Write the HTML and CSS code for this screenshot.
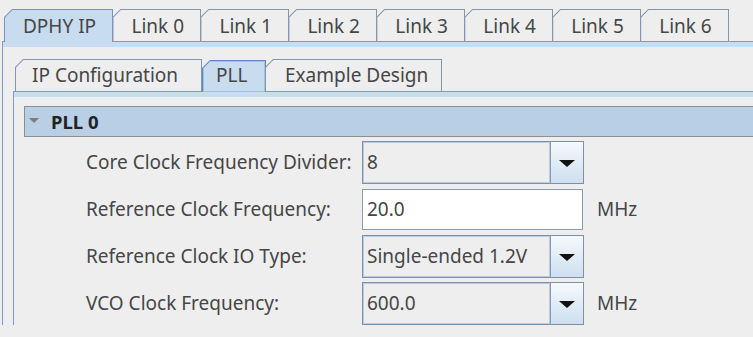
FILE: index.html
```html
<!DOCTYPE html>
<html lang="en">
<head>
    <meta charset="UTF-8">
    <title>DPHY IP - PLL</title>
    <link rel="stylesheet" href="styles.css">
</head>
<body>

<div class="tabpane outer">
    <div class="tabrow">
        <div class="tab selected"><div class="face">DPHY IP</div></div>
        <div class="tab"><div class="face">Link 0</div></div>
        <div class="tab"><div class="face">Link 1</div></div>
        <div class="tab"><div class="face">Link 2</div></div>
        <div class="tab"><div class="face">Link 3</div></div>
        <div class="tab"><div class="face">Link 4</div></div>
        <div class="tab"><div class="face">Link 5</div></div>
        <div class="tab"><div class="face">Link 6</div></div>
    </div>
    <div class="tabbody">
        <div class="strip"></div>

        <div class="tabpane inner">
            <div class="tabrow">
                <div class="tab tab-ipconf"><div class="face">IP Configuration</div></div>
                <div class="tab selected focused tab-pll"><div class="face">PLL</div></div>
                <div class="tab tab-example"><div class="face">Example Design</div></div>
            </div>
            <div class="tabbody">
                <div class="strip"></div>

                <div class="section">
                    <div class="section-head">
                        <span class="toggle"></span>
                        <span class="section-title">PLL 0</span>
                    </div>

                    <div class="form">
                        <label class="field-label">Core Clock Frequency Divider:</label>
                        <div class="combo">
                            <div class="combo-value">8</div>
                            <div class="combo-arrow"><span></span></div>
                        </div>
                        <span class="unit"></span>

                        <label class="field-label">Reference Clock Frequency:</label>
                        <div class="textfield">20.0</div>
                        <span class="unit">MHz</span>

                        <label class="field-label">Reference Clock IO Type:</label>
                        <div class="combo">
                            <div class="combo-value">Single-ended 1.2V</div>
                            <div class="combo-arrow"><span></span></div>
                        </div>
                        <span class="unit"></span>

                        <label class="field-label">VCO Clock Frequency:</label>
                        <div class="combo">
                            <div class="combo-value">600.0</div>
                            <div class="combo-arrow"><span></span></div>
                        </div>
                        <span class="unit">MHz</span>
                    </div>
                </div>
            </div>
        </div>
    </div>
</div>

</body>
</html>
```

FILE: styles.css
```css
body {
    margin: 0;
    background-color: #eeeeee;
    font-family: "Noto Sans", "Open Sans", sans-serif;
    font-size: 19px;
    color: #464646;
    overflow: hidden;
    height: 337px;
}

/* tabbed panes */
.outer {
    margin: 9px 0 0 2px;
}
.tabrow {
    display: flex;
    padding-left: 2px;
    position: relative;
    z-index: 1;
}
.tab {
    height: 32px;
    padding: 1px 1px 0 1px;
    box-sizing: border-box;
    background-color: #8496ad;
    clip-path: polygon(8px 0, 100% 0, 100% 100%, 0 100%, 0 8px);
    margin-right: -1px;
}
.tab .face {
    height: 100%;
    display: flex;
    align-items: center;
    padding: 0 16.4px 2px 18px;
    background-color: #eeeeee;
    clip-path: polygon(7.4px 0, 100% 0, 100% 100%, 0 100%, 0 7.4px);
}
.tab.selected {
    height: 33px;
    margin-bottom: -1px;
    background-color: #7e93b8;
}
.tab.selected .face {
    background-color: #c8dcf0;
    padding-bottom: 3px;
}
.tabbody {
    border-top: 1px solid #7d9ad0;
    border-left: 1px solid #7d9ad0;
}
.strip {
    height: 5px;
    background-color: #cadcf1;
}

.inner {
    margin: 12px 0 0 10px;
}
.inner .tabrow {
    padding-left: 2px;
}
.tab-ipconf .face {
    width: 185px;
    padding: 0 0 2px 16px;
    box-sizing: border-box;
}
.tab-pll .face {
    width: 62px;
    padding: 0 0 2px 13px;
    box-sizing: border-box;
}
.tab-example .face {
    width: 175px;
    padding: 0 0 2px 19px;
    box-sizing: border-box;
}
.tab.focused {
    margin-top: 1px;
    height: 32px;
    background-color: #6485c4;
    margin-left: 1px;
}
.tab.focused .face {
    box-shadow: inset 0 0 0 1px #a5bfe6;
}

/* PLL section */
.section {
    padding: 9px 0 0 10px;
}
.section-head {
    height: 31px;
    box-sizing: border-box;
    border: 1px solid #8e8e8e;
    border-right: none;
    background-color: #b8cfe6;
    display: flex;
    align-items: center;
    padding-bottom: 1px;
}
.toggle {
    width: 0;
    height: 0;
    border-left: 5px solid transparent;
    border-right: 5px solid transparent;
    border-top: 5px solid #7d7d7d;
    margin: 0 12px 2px 4px;
}
.section-title {
    font-weight: bold;
    font-size: 18.5px;
    color: #222222;
}

.form {
    display: grid;
    grid-template-columns: 276px 222px auto;
    grid-auto-rows: 43px;
    row-gap: 4px;
    align-items: center;
    padding: 4px 0 0 62px;
}
.field-label {
    padding-bottom: 1px;
}
.unit {
    margin-left: 13px;
    padding-bottom: 1px;
}

.combo {
    height: 43px;
    box-sizing: border-box;
    border: 1px solid #7f90a6;
    display: flex;
}
.combo-value {
    flex: 1;
    border: 1px solid #b9cbe0;
    background-color: #eeeeee;
    display: flex;
    align-items: center;
    padding: 0 0 1px 3px;
}
.combo-arrow {
    width: 32px;
    border-left: 1px solid #8a9bb0;
    background: linear-gradient(#f6f9fc, #cddff0);
    display: flex;
    align-items: center;
    justify-content: center;
}
.combo-arrow span {
    width: 0;
    height: 0;
    border-left: 8px solid transparent;
    border-right: 8px solid transparent;
    border-top: 7px solid #111111;
    margin-top: 1px;
}

.textfield {
    height: 41px;
    width: 221px;
    box-sizing: border-box;
    border: 1px solid #8c9cae;
    background-color: #ffffff;
    display: flex;
    align-items: center;
    padding: 0 0 1px 4px;
}
```
